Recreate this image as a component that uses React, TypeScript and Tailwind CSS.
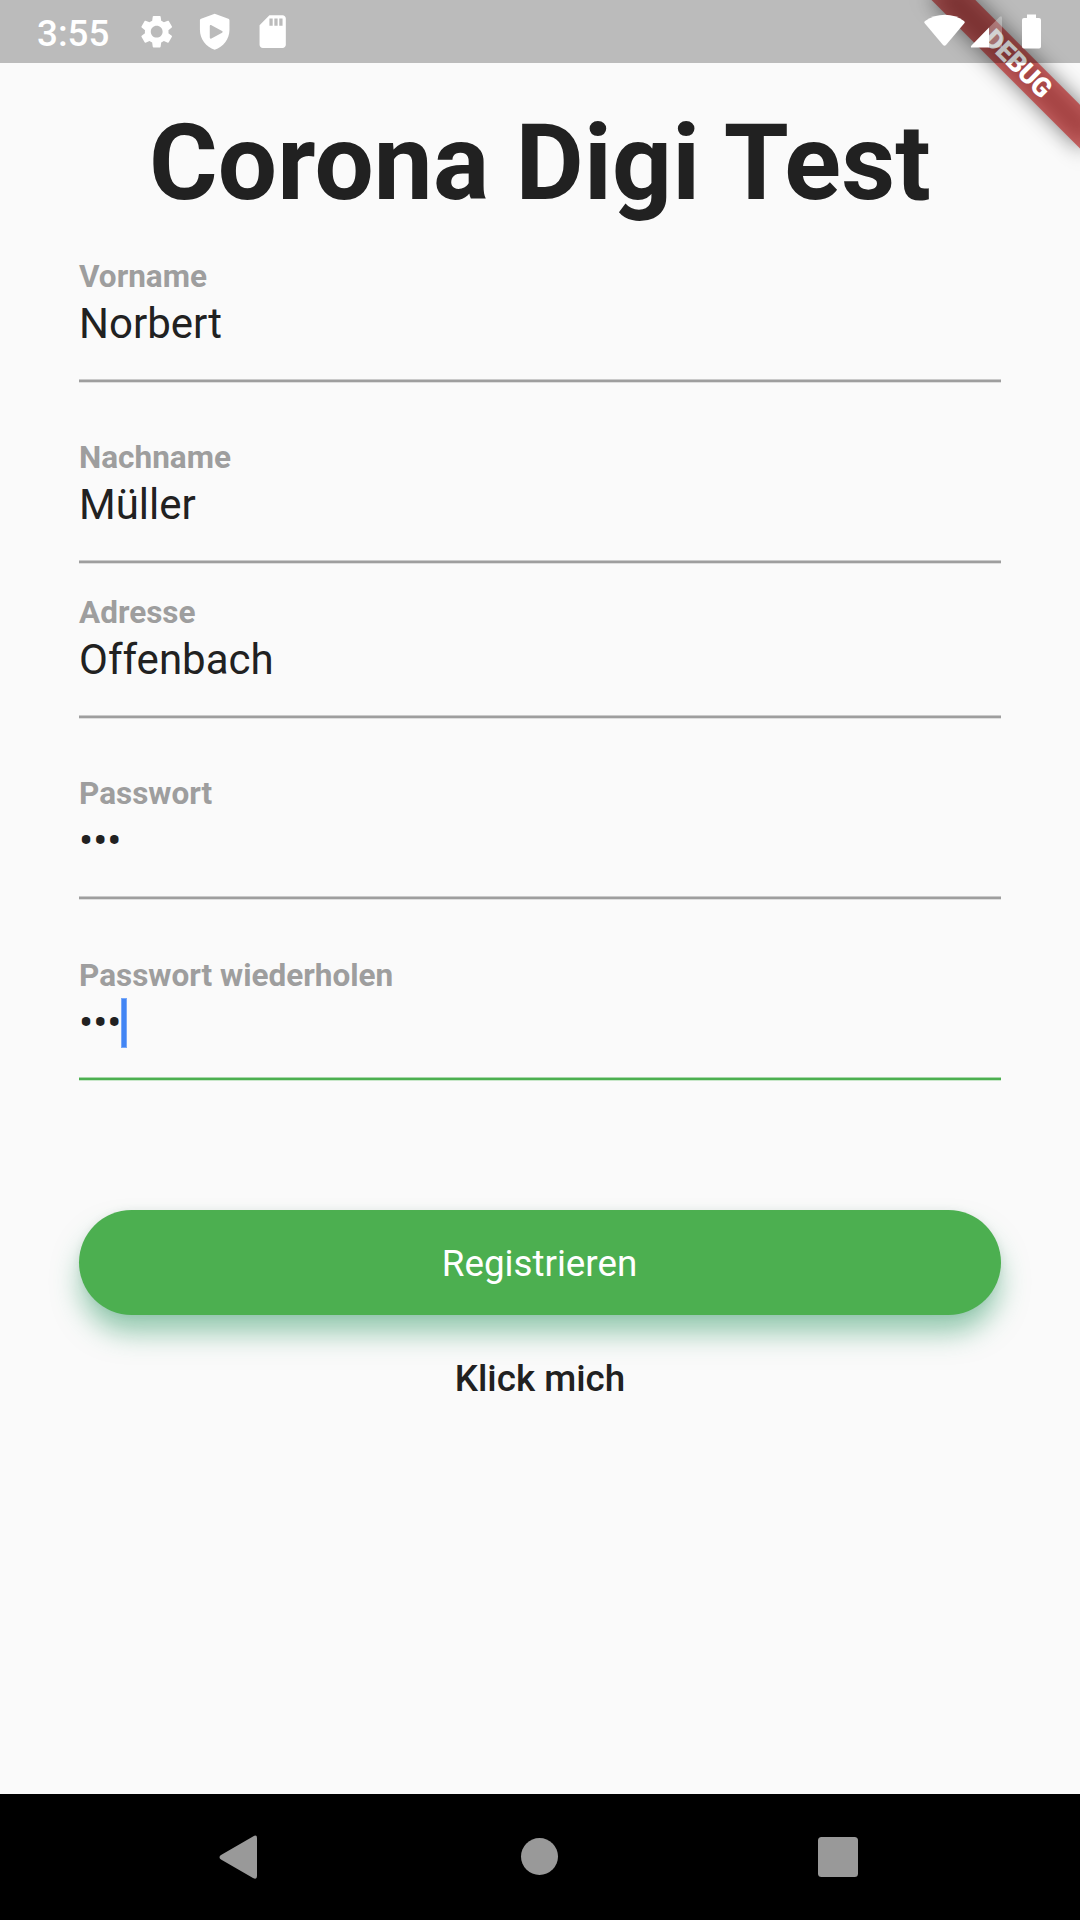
import type { ReactNode } from "react";

type FieldProps = {
  label: string;
  value: string;
  focused?: boolean;
  className?: string;
};

function Field({ label, value, focused = false, className = "" }: FieldProps) {
  return (
    <div className={className}>
      <label className="block h-[37px] text-[31.5px] leading-[37px] font-bold text-[#9e9e9e]">{label}</label>
      <div className="mt-1 flex h-[49px] items-center text-[42px] leading-[49px] text-[#212121]">
        <span>{value}</span>
        {focused && <span className="-ml-px h-[50px] w-[6px] border border-[#78a8f8] bg-[#4285f4]" />}
      </div>
      <div
        className={
          focused
            ? "mt-[30px] h-[4px] border-y border-t-[#a7d8a9] border-b-[#c8e7c9] bg-[#4caf50]"
            : "mt-[31px] h-[4px] border-y border-t-[#cacaca] border-b-[#dedede] bg-[#9e9e9e]"
        }
      />
    </div>
  );
}

function StatusIcon({ children, className = "" }: { children: ReactNode; className?: string }) {
  return (
    <svg viewBox="0 0 24 24" fill="currentColor" fillRule="evenodd" className={`h-[39.4px] w-[39.4px] ${className}`}>
      {children}
    </svg>
  );
}

function StatusBar() {
  return (
    <header className="relative z-20 flex h-[63px] items-center bg-black/25 pl-[37px] text-white">
      <span className="w-[100px] pt-[4px] text-[36.75px] leading-[43px] font-medium">3:55</span>
      <StatusIcon>
        <path d="M19.14 12.94c.04-.3.06-.61.06-.94 0-.32-.02-.64-.07-.94l2.03-1.58c.18-.14.23-.41.12-.61l-1.92-3.32c-.12-.22-.37-.29-.59-.22l-2.39.96c-.5-.38-1.03-.7-1.62-.94l-.36-2.54c-.04-.24-.24-.41-.48-.41h-3.84c-.24 0-.43.17-.47.41l-.36 2.54c-.59.24-1.13.57-1.62.94l-2.39-.96c-.22-.08-.47 0-.59.22L2.74 8.87c-.12.21-.08.47.12.61l2.03 1.58c-.05.3-.09.63-.09.94s.02.64.07.94l-2.03 1.58c-.18.14-.23.41-.12.61l1.92 3.32c.12.22.37.29.59.22l2.39-.96c.5.38 1.03.7 1.62.94l.36 2.54c.05.24.24.41.48.41h3.84c.24 0 .44-.17.47-.41l.36-2.54c.59-.24 1.13-.56 1.62-.94l2.39.96c.22.08.47 0 .59-.22l1.92-3.32c.12-.22.07-.47-.12-.61l-2.01-1.58zM12 15.6c-1.98 0-3.6-1.62-3.6-3.6s1.62-3.6 3.6-3.6 3.6 1.62 3.6 3.6-1.62 3.6-3.6 3.6z" />
      </StatusIcon>
      <StatusIcon className="ml-[19px]">
        <path d="M12 1 3.7 4.1C3.2 4.3 3 4.6 3 5.1V11c0 5.5 3.8 10.4 9 12 5.2-1.6 9-6.5 9-12V5.1c0-.5-.2-.8-.7-1zM9 8.6c0-.7.5-.9 1-.6l6.5 3.6c.5.3.5.7 0 1L10 16.1c-.5.3-1 .1-1-.5z" />
      </StatusIcon>
      <StatusIcon className="ml-[18px]">
        <path d="M18 2h-8L4 8v12c0 1.1.9 2 2 2h12c1.1 0 2-.9 2-2V4c0-1.1-.9-2-2-2zM10 4v4.400h2V4zM13 4v4.400h2V4zM16 4v4.400h2V4z" />
      </StatusIcon>
      <svg viewBox="0 0 120 36" className="mr-[38px] ml-auto h-[36px] w-[120px]" fill="currentColor">
        <path d="M2.5 9Q1.8 8 3 7C15-1.2 31-1.2 42 7Q43.2 8 42.5 9L24 31Q22.5 32.5 21 31Z" />
        <path d="M49 33.5Q48.5 32 49.5 31.5L67 13.5V33.5Z" />
        <path opacity=".3" d="M67 13.5L77.5 3Q80 1 80 4V33.5H67Z" />
        <path d="M105 .5h9v3.5h3q2 0 2 2v26.500q0 2-2 2h-15q-2 0-2-2v-26.500q0-2 2-2h3z" />
      </svg>
    </header>
  );
}

function DebugBanner() {
  return (
    <div className="pointer-events-none absolute top-0 right-0 z-10 h-[300px] w-[300px] overflow-hidden">
      <div className="absolute top-0 left-[300px] origin-top-left rotate-45">
        <div className="absolute top-[73.5px] -left-[105px] h-[31.5px] w-[210px] bg-black/50 blur-[10.4px]" />
        <div className="absolute top-[73.5px] -left-[105px] flex h-[31.5px] w-[210px] items-center justify-center bg-[#b71c1c]/63 pl-[2px] text-[26.8px] leading-none font-black tracking-[-0.5px] text-white">
          DEBUG
        </div>
      </div>
    </div>
  );
}

function NavBar() {
  return (
    <nav className="h-[126px] bg-black">
      <svg viewBox="0 0 1080 126" className="h-[126px] w-full" fill="#999">
        <path d="M253 42.5Q257 40 257 44V82Q257 86 253 84L221 65.5Q218 63 221 61Z" />
        <circle cx="539.5" cy="62.5" r="18.5" />
        <rect x="818" y="43" width="40" height="40" rx="3.5" />
      </svg>
    </nav>
  );
}

export default function App() {
  return (
    <div className="relative flex h-[1920px] w-[1080px] flex-col overflow-hidden bg-[#fafafa] font-['Roboto',sans-serif]">
      <StatusBar />
      <DebugBanner />
      <main className="flex flex-1 flex-col px-[79px] pt-[39px]">
        <h1 className="text-center text-[105px] leading-[123px] font-bold tracking-[0.2px] whitespace-nowrap text-[#212121]">
          Corona Digi Test
        </h1>
        <form className="mt-[33px]">
          <Field label="Vorname" value="Norbert" />
          <Field label="Nachname" value="Müller" className="mt-[56px]" />
          <Field label="Adresse" value="Offenbach" className="mt-[30px]" />
          <Field label="Passwort" value="•••" className="mt-[56px]" />
          <Field label="Passwort wiederholen" value="•••" focused className="mt-[57px]" />
          <button
            type="button"
            className="mt-[129px] block h-[105px] w-full rounded-full bg-[#4caf50] pt-[2px] pr-px text-[36.75px] text-white shadow-[0_19px_28px_-2px_rgba(40,150,95,0.5),0_0_8px_rgba(0,0,0,0.06)]"
          >
            Registrieren
          </button>
        </form>
        <button type="button" className="mx-auto mt-[42px] text-[36.75px] leading-[43px] font-medium text-[#212121]">
          Klick mich
        </button>
      </main>
      <NavBar />
    </div>
  );
}
